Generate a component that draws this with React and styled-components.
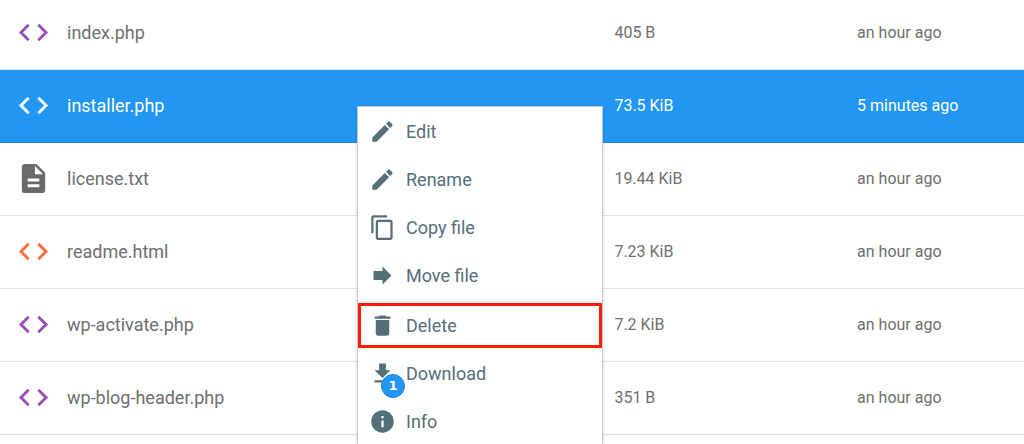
import React from 'react';
import styled, { createGlobalStyle } from 'styled-components';
import { MdCode, MdContentCopy, MdDelete, MdDescription, MdEdit, MdForward, MdGetApp, MdInfo } from 'react-icons/md';

const GlobalStyle = createGlobalStyle`
* {
    box-sizing: border-box;
}
body {
    margin: 0;
    background-color: #fff;
    font-family: Roboto, "Liberation Sans", sans-serif;
}
`

const Page = styled.main`
position: relative;
height: 100vh;
overflow: hidden;
`

const FileTable = styled.table`
width: 100%;
margin-top: -3px;
border-collapse: separate;
border-spacing: 0;
table-layout: fixed;
`

const FileRow = styled.tr`
height: 73px;
color: ${props => props.$selected ? '#fff' : '#6f6f6f'};
background-color: ${props => props.$selected ? '#2196f3' : '#fff'};

td, th {
    padding: 0 0 2px;
    border-bottom: 1px solid ${props => props.$selected ? '#1e88e0' : '#e2e2e2'};
}
`

const IconCell = styled.td`
width: 67px;
color: ${props => props.$color};

svg {
    display: block;
    margin-left: 16px;
}
`

const NameCell = styled.th`
font-size: 18px;
font-weight: 400;
text-align: left;
`

const InfoCell = styled.td`
width: ${props => props.$width};
font-size: 16px;
`

const Menu = styled.ul`
position: absolute;
top: 106px;
left: 357px;
width: 246px;
margin: 0;
padding: 0;
list-style: none;
background-color: #fff;
border: 1px solid #c8c8c8;
box-shadow: 0 1px 4px rgba(0, 0, 0, 0.15);
`

const MenuButton = styled.button`
display: flex;
align-items: center;
gap: 10px;
width: 100%;
height: 48px;
padding: 0 11px;
border: none;
background-color: transparent;
color: #546e7a;
font-family: inherit;
font-size: 18px;
text-align: left;
`

const MarkedButton = styled(MenuButton)`
height: 45px;
margin: 4px 0 1px;
padding: 0 8px;
border: 3px solid #ff1e05;
`

const MenuIcon = styled.span`
position: relative;
display: flex;
`

const Badge = styled.span`
position: absolute;
top: 14px;
left: 12px;
display: flex;
align-items: center;
justify-content: center;
width: 24px;
height: 24px;
border: 1px solid #1c86dd;
border-radius: 50%;
background-color: #2196f3;
color: #fff;
font-family: "DejaVu Sans", sans-serif;
font-size: 13px;
font-weight: 700;
`

const PURPLE = '#9850b4'

const files = [
    { name: 'index.php', size: '405 B', modified: 'an hour ago', icon: MdCode, color: PURPLE },
    { name: 'installer.php', size: '73.5 KiB', modified: '5 minutes ago', icon: MdCode, color: '#fff', selected: true },
    { name: 'license.txt', size: '19.44 KiB', modified: 'an hour ago', icon: MdDescription, color: '#6a6a6a' },
    { name: 'readme.html', size: '7.23 KiB', modified: 'an hour ago', icon: MdCode, color: '#f9703e' },
    { name: 'wp-activate.php', size: '7.2 KiB', modified: 'an hour ago', icon: MdCode, color: PURPLE },
    { name: 'wp-blog-header.php', size: '351 B', modified: 'an hour ago', icon: MdCode, color: PURPLE },
]

const actions = [
    { label: 'Edit', icon: MdEdit },
    { label: 'Rename', icon: MdEdit },
    { label: 'Copy file', icon: MdContentCopy },
    { label: 'Move file', icon: MdForward },
    { label: 'Delete', icon: MdDelete, marked: true },
    { label: 'Download', icon: MdGetApp, count: 1 },
    { label: 'Info', icon: MdInfo },
]

export default function App() {
    return (
        <Page>
            <GlobalStyle />
            <FileTable>
                <tbody>
                    {files.map(({ icon: Icon, ...file }) => (
                        <FileRow key={file.name} $selected={file.selected}>
                            <IconCell $color={file.color}><Icon size={35} /></IconCell>
                            <NameCell scope="row">{file.name}</NameCell>
                            <InfoCell $width="23.7%">{file.size}</InfoCell>
                            <InfoCell $width="16.3%">{file.modified}</InfoCell>
                        </FileRow>
                    ))}
                </tbody>
            </FileTable>

            <Menu>
                {actions.map(({ icon: Icon, label, marked, count }) => {
                    const Button = marked ? MarkedButton : MenuButton
                    return (
                        <li key={label}>
                            <Button type="button">
                                <MenuIcon>
                                    <Icon size={27} />
                                    {count && <Badge>{count}</Badge>}
                                </MenuIcon>
                                {label}
                            </Button>
                        </li>
                    )
                })}
            </Menu>
        </Page>
    )
}
